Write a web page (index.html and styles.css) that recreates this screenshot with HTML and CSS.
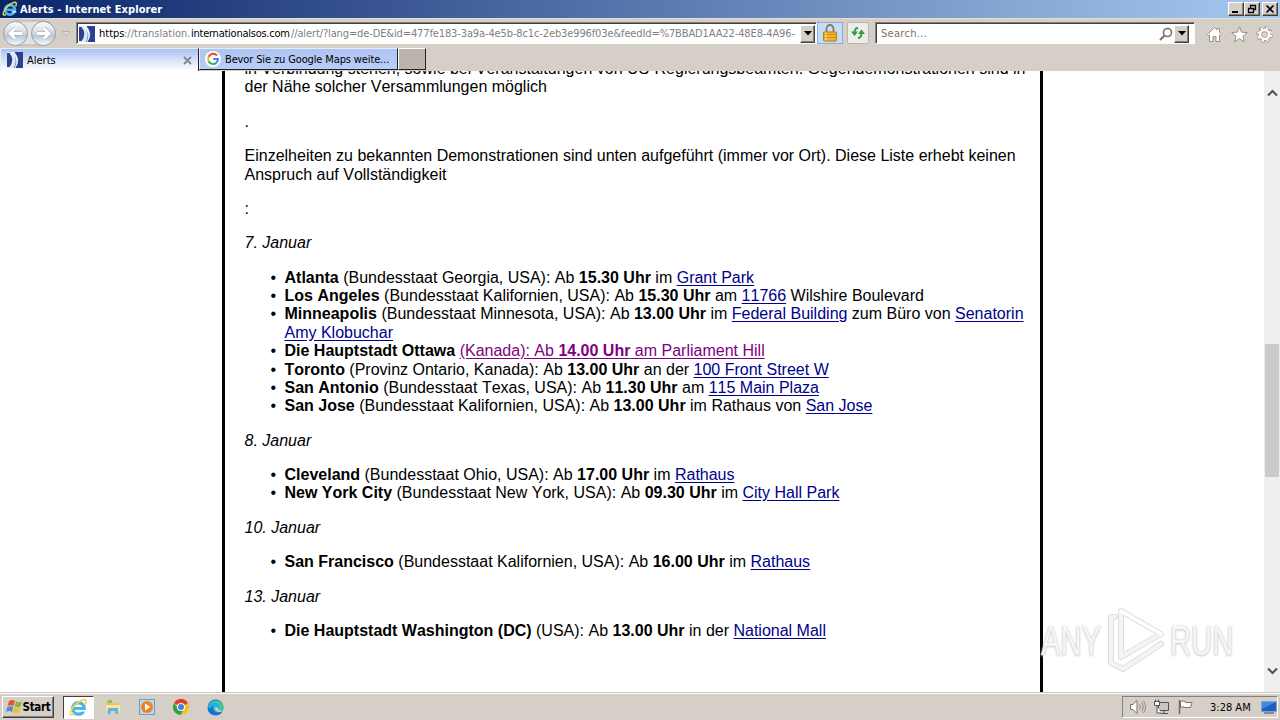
FILE: index.html
```html
<!DOCTYPE html>
<html lang="de">
<head>
  <meta charset="UTF-8">
  <title>Alerts - Internet Explorer</title>
  <link rel="stylesheet" href="styles.css">
</head>
<body>
  <!-- Shared icons -->
  <svg width="0" height="0" class="defs">
    <symbol id="ie" viewBox="0 0 20 20">
      <circle cx="10" cy="11" r="6" fill="none" stroke="#49b5ec" stroke-width="3.6"/>
      <path d="M5 11h11" stroke="#49b5ec" stroke-width="3"/>
      <path d="M12 13.5h6" stroke="#fff" stroke-width="1.6"/>
      <path d="M5 17C-1 20 1 12 8 6s12-6 9 1" fill="none" stroke="#f3d44b" stroke-width="1.8"/>
    </symbol>
    <symbol id="sos" viewBox="0 0 16 16">
      <rect width="16" height="16" fill="#dfe7f6"/>
      <path d="M0 1h2.500q5.500 7 0 14H0z" fill="#2b4190"/>
      <path d="M6 0h10v16H7q4-8-1-16z" fill="#2b4190"/>
      <path d="M5 0q7 7 3 16 6-8-1-16z" fill="#fff" stroke="#fff" stroke-width=".6"/>
    </symbol>
  </svg>

  <div class="window">
    <header class="titlebar">
      <svg class="app-icon" width="16" height="16"><use href="#ie"/></svg>
      <span class="title">Alerts - Internet Explorer</span>
      <div class="window-buttons">
        <button><svg width="14" height="12"><path d="M3 9h6" stroke="#000" stroke-width="2"/></svg></button>
        <button><svg width="14" height="12"><path d="M5.500 5V2.500h5v4H9M5 2.500h6M3.500 5.500h5v4h-5zM3 5.500h6" fill="none" stroke="#000" stroke-width="1.300"/></svg></button>
        <button class="close"><svg width="14" height="12"><path d="M3.500 2.500l7 7m0-7l-7 7" stroke="#000" stroke-width="1.700"/></svg></button>
      </div>
    </header>

    <nav class="toolbar">
      <svg class="back-forward" width="74" height="28" viewBox="0 0 74 28">
        <defs>
          <linearGradient id="glass" x2="0" y2="1">
            <stop stop-color="#fff"/><stop offset=".45" stop-color="#d6dce3"/><stop offset=".6" stop-color="#b9c8d5"/><stop offset="1" stop-color="#f4ffff"/>
          </linearGradient>
        </defs>
        <path d="M15 2h29q6 0 8 4v16q-3 4-8 4H15z" fill="#e4e2e0" stroke="#b5b1ac"/>
        <circle cx="15.500" cy="14.500" r="12" fill="url(#glass)" stroke="#979da3"/>
        <circle cx="43.500" cy="14.500" r="12" fill="url(#glass)" stroke="#979da3"/>
        <path d="M22 14.500H10m5-5l-5 5 5 5M37 14.500h12m-5-5l5 5-5 5" fill="none" stroke="#a2adb6" stroke-width="4.200"/>
        <path d="M22 14.500H10m5-5l-5 5 5 5M37 14.500h12m-5-5l5 5-5 5" fill="none" stroke="#fff" stroke-width="3"/>
        <path d="M62.500 12.500h7l-3.500 4z" fill="#e4e0dc" stroke="#b8b3ac"/>
      </svg>
      <div class="field address">
        <svg width="16" height="16"><use href="#sos"/></svg>
        <span class="url"><b class="u1">https</b><span class="u2">://translation.</span><b class="u3">internationalsos.com</b><span class="u4">//alert/?lang=de-DE&amp;id=477fe183-3a9a-4e5b-8c1c-2eb3e996f03e&amp;feedId=%7BBAD1AA22-48E8-4A96-</span></span>
        <button class="drop"><svg width="8" height="5"><path d="M0 0h8L4 4.500z"/></svg></button>
      </div>
      <div class="lock">
        <svg width="16" height="18" viewBox="0 0 16 18">
          <path d="M4.500 8V4.500a3.500 3.500 0 0 1 7 0V8" fill="none" stroke="#8c7b53" stroke-width="1.800"/>
          <rect x="1.500" y="8" width="13" height="9" rx="1" fill="#f0b429" stroke="#b57b16"/>
          <path d="M2 10.500h12M2 13.500h12" stroke="#cf8f1b"/><path d="M4 8.500v8" stroke="#ffe08a"/>
        </svg>
      </div>
      <div class="refresh">
        <svg width="16" height="16" viewBox="0 0 16 16">
          <path d="M8 3Q4.500 3 4.500 8M8 13q3.500 0 3.500-5" fill="none" stroke="#2e9b3d" stroke-width="1.800"/>
          <path d="M1 6.500h7L4.500 11zM8 9h7l-3.500-4.500z" fill="#2e9b3d"/>
        </svg>
      </div>
      <div class="field search">
        <span class="placeholder">Search...</span>
        <svg width="14" height="14"><circle cx="8.500" cy="5.500" r="4" fill="none" stroke="#77716e" stroke-width="1.600"/><path d="M5.500 8.500L1 13" stroke="#77716e" stroke-width="2"/></svg>
        <button class="drop"><svg width="8" height="5"><path d="M0 0h8L4 4.500z"/></svg></button>
      </div>
      <div class="tools">
        <svg width="17" height="17"><path d="M1.500 8.500L8.500 1.500l2.500 2.500V2.500h2.500v4l2 2-1.200 1.200-.8-.8V15.500h-3.500v-5h-3v5H3.500V9l-1 .8z" fill="#fff" stroke="#97918c"/></svg>
        <svg width="17" height="17"><path d="M8.500 .8l2.100 5.400 5.700.4-4.400 3.600 1.500 5.500-4.900-3.100-4.900 3.100 1.500-5.500L.7 6.600l5.700-.4z" fill="#fff" stroke="#97918c"/></svg>
        <svg width="17" height="17" viewBox="0 0 17 17"><circle cx="8.500" cy="8.500" r="6.800" fill="none" stroke="#97918c" stroke-width="2.800" stroke-dasharray="3.200 2.140"/><circle cx="8.500" cy="8.500" r="4.600" fill="none" stroke="#97918c" stroke-width="4"/><circle cx="8.500" cy="8.500" r="6.500" fill="none" stroke="#fff" stroke-width="2" stroke-dasharray="2.200 2.905" stroke-dashoffset="-.4"/><circle cx="8.500" cy="8.500" r="4.500" fill="none" stroke="#fff" stroke-width="2.500"/><circle cx="8.500" cy="8.500" r="2" fill="#d6cfc8"/></svg>
      </div>
    </nav>

    <div class="tabs">
      <div class="tab active">
        <svg width="16" height="16"><use href="#sos"/></svg>
        <span class="tab-name">Alerts</span>
        <svg class="tab-close" width="9" height="9"><path d="M1 1l7 7m0-7L1 8" stroke="#85888f" stroke-width="2"/></svg>
      </div>
      <div class="tab">
        <svg width="16" height="16" viewBox="0 0 16 16">
          <circle cx="8" cy="8" r="8" fill="#fff"/>
          <g fill="none" stroke-width="2"><path d="M12 4.500A5 5 0 0 0 3.600 5.800" stroke="#ea4335"/><path d="M3.600 5.800a5 5 0 0 0 0 4.400" stroke="#fbbc05"/><path d="M3.600 10.200a5 5 0 0 0 7.800 1.500" stroke="#34a853"/><path d="M11.400 11.700A5 5 0 0 0 13 8H8.200" stroke="#4285f4"/></g>
        </svg>
        <span class="tab-name maps">Bevor Sie zu Google Maps weite...</span>
      </div>
      <div class="new-tab"></div>
    </div>

    <div class="viewport">
      <main class="page">
        <article class="alert">
          <p>in Verbindung stehen, sowie bei Veranstaltungen von US-Regierungsbeamten. Gegendemonstrationen sind in<br>der Nähe solcher Versammlungen möglich</p>
          <p>.</p>
          <p>Einzelheiten zu bekannten Demonstrationen sind unten aufgeführt (immer vor Ort). Diese Liste erhebt keinen<br>Anspruch auf Vollständigkeit</p>
          <p>:</p>
          <p><em>7. Januar</em></p>
          <ul>
            <li><b>Atlanta</b> (Bundesstaat Georgia, USA): Ab <b>15.30 Uhr</b> im <a href="#">Grant Park</a></li>
            <li><b>Los Angeles</b> (Bundesstaat Kalifornien, USA): Ab <b>15.30 Uhr</b> am <a href="#">11766</a> Wilshire Boulevard</li>
            <li><b>Minneapolis</b> (Bundesstaat Minnesota, USA): Ab <b>13.00 Uhr</b> im <a href="#">Federal Building</a> zum Büro von <a href="#">Senatorin<br>Amy Klobuchar</a></li>
            <li><b>Die Hauptstadt Ottawa</b> <a class="visited" href="#">(Kanada): Ab <b>14.00 Uhr</b> am Parliament Hill</a></li>
            <li><b>Toronto</b> (Provinz Ontario, Kanada): Ab <b>13.00 Uhr</b> an der <a href="#">100 Front Street W</a></li>
            <li><b>San Antonio</b> (Bundesstaat Texas, USA): Ab <b>11.30 Uhr</b> am <a href="#">115 Main Plaza</a></li>
            <li><b>San Jose</b> (Bundesstaat Kalifornien, USA): Ab <b>13.00 Uhr</b> im Rathaus von <a href="#">San Jose</a></li>
          </ul>
          <p><em>8. Januar</em></p>
          <ul>
            <li><b>Cleveland</b> (Bundesstaat Ohio, USA): Ab <b>17.00 Uhr</b> im <a href="#">Rathaus</a></li>
            <li><b>New York City</b> (Bundesstaat New York, USA): Ab <b>09.30 Uhr</b> im <a href="#">City Hall Park</a></li>
          </ul>
          <p><em>10. Januar</em></p>
          <ul>
            <li><b>San Francisco</b> (Bundesstaat Kalifornien, USA): Ab <b>16.00 Uhr</b> im <a href="#">Rathaus</a></li>
          </ul>
          <p><em>13. Januar</em></p>
          <ul>
            <li><b>Die Hauptstadt Washington (DC)</b> (USA): Ab <b>13.00 Uhr</b> in der <a href="#">National Mall</a></li>
          </ul>
        </article>
      </main>
      <div class="scrollbar">
        <svg width="11" height="8"><path d="M1 6.500l4.500-4.500L10 6.500" fill="none" stroke="#555" stroke-width="2.200"/></svg>
        <div class="thumb"></div>
        <svg width="11" height="8"><path d="M1 1.500L5.500 6 10 1.500" fill="none" stroke="#555" stroke-width="2.200"/></svg>
      </div>
      <div class="watermark">
        <span>ANY</span>
        <svg width="58" height="66" viewBox="0 0 58 66">
          <g fill="none" stroke-linejoin="round" stroke-linecap="round">
            <path d="M14 4v46l40-23zM8 10H4v46l12 6 38-25" stroke="#dedede" stroke-width="6"/>
            <path d="M14 4v46l40-23zM8 10H4v46l12 6 38-25" stroke="#f4f4f4" stroke-width="4"/>
            <path d="M14 4l40 23" stroke="#fff" stroke-width="3"/>
          </g>
        </svg>
        <span>RUN</span>
      </div>
    </div>

    <footer class="taskbar">
      <button class="start">
        <svg width="17" height="16" viewBox="0 0 17 16"><path d="M3 2q3-2 6 0L7.500 7Q4.500 5.500 1.500 7z" fill="#e2572b"/><path d="M10 2.500q3 1.500 6 0L14.500 7.500q-3 1.500-6 0z" fill="#7fb83a"/><path d="M1.300 8q3-1.500 6 0L6 13q-3-2-6 0z" fill="#4a8fd6"/><path d="M8.300 8.500q3 1.500 6 0L13 13.500q-3 1.500-6 0z" fill="#f4bd2c"/></svg>
        <span>Start</span>
      </button>
      <div class="running"><svg width="19" height="19"><use href="#ie"/></svg></div>
      <div class="pinned">
        <svg width="16" height="16"><path d="M1 2h5l1 2h7v8H1z" fill="#e9c767"/><path d="M3 1h4v3H3z" fill="#7fc46c"/><path d="M1 6h14v6H1z" fill="#f7e5a0"/><path d="M3 15V9h10v6h-2.500v-3h-5v3z" fill="#61b4dd"/></svg>
        <svg width="16" height="16"><rect x=".5" y=".5" width="15" height="15" fill="#b9d7ee" stroke="#6c9fc6"/><circle cx="8" cy="8" r="6" fill="#f08220"/><path d="M6 4.500v7L11.500 8z" fill="#fff"/></svg>
        <svg width="16" height="16" viewBox="0 0 16 16"><circle cx="8" cy="8" r="8" fill="#fbc116"/><path d="M8 8L1 4a8 8 0 0 1 14 0z" fill="#e33b2e"/><path d="M1 4a8 8 0 0 0 6.500 12L11 10 4.500 9z" fill="#2da14c"/><circle cx="8" cy="8" r="4" fill="#fff"/><circle cx="8" cy="8" r="3" fill="#3f7fe8"/></svg>
        <svg width="17" height="17" viewBox="0 0 17 17"><circle cx="8.500" cy="8.500" r="8" fill="#1673c9"/><path d="M1 7a8 8 0 0 1 15.500 1q0 4-4.500 3.500-2.500-.5-1-2Q12 5 7 5 3 5 1 7z" fill="#3ccb9b"/><path d="M1 7Q3 2 9 3.500q5 2 2 6-1.500 1.500 1 2Q14 13 16 11.500 12 15 8 12.500T7 7Q4 7 3 10 1 9 1 7z" fill="#27b0e0"/><path d="M8 8q-1 4 4 5 2 .3 4-1 0-1-3-.5-3-1-2-2.500z" fill="#d6cfc8"/></svg>
      </div>
      <div class="tray">
        <svg width="17" height="16"><path d="M1.500 5.500H4l4-4v13l-4-4H1.500z" fill="#fff" stroke="#77736f"/><path d="M10.500 5.500q2 2.500 0 5M12.500 3.500q3.500 4.500 0 9M14.500 2q4 6 0 12" fill="none" stroke="#8d8985"/></svg>
        <svg width="17" height="16"><path d="M5.500 3.500h10v8h-10z" fill="#c9c7c4" stroke="#55514e"/><path d="M8 14.500h7M11 12v2" stroke="#55514e"/><path d="M1.500 2.500h5v4h-5zM2.500 .5v2m3-2v2M4 7v7h4" fill="#fff" stroke="#55514e"/></svg>
        <svg width="17" height="16"><path d="M2.500 1v14" stroke="#6c6865" stroke-width="1.500"/><path d="M3.500 2.500q3-1.500 5.500 1h6l-1.500 5H8q-2-1.500-4.500 0z" fill="#fff" stroke="#77736f"/></svg>
        <span class="clock">3:28 AM</span>
        <svg class="desktop" width="16" height="14"><rect x=".5" y="1.500" width="15" height="10" fill="#1d5fc0" stroke="#7fa6d4"/><path d="M1 2h14L1 9z" fill="#3f8ae0"/><path d="M3 13h10" stroke="#26477c"/></svg>
      </div>
    </footer>
  </div>
</body>
</html>
```
FILE: styles.css
```css
body {
  margin: 0;
  background: #fff;
  font-family: "DejaVu Sans Condensed", "DejaVu Sans", sans-serif;
  font-size: 11px;
}

.defs {
  position: absolute;
}

svg {
  display: block;
  flex: none;
}

button {
  padding: 0;
  box-sizing: border-box;
  background: #d6cfc8;
  border: 1px solid;
  border-color: #fff #404040 #404040 #fff;
  box-shadow: inset -1px -1px #85807a;
  display: flex;
  align-items: center;
  justify-content: center;
}

.window {
  width: 1280px;
  height: 720px;
  display: flex;
  flex-direction: column;
  overflow: hidden;
}

/* Title bar */
.titlebar {
  height: 18px;
  flex: none;
  display: flex;
  align-items: center;
  padding: 0 2px;
  background: linear-gradient(to right, #0a246a, #a6caf0);
}

.title {
  margin-left: 2px;
  color: #fff;
  font-weight: bold;
  letter-spacing: 0.08px;
}

.window-buttons {
  margin-left: auto;
  display: flex;
}

.window-buttons button {
  width: 16px;
  height: 14px;
}

.window-buttons .close {
  margin-left: 2px;
}

/* Navigation */
.toolbar {
  height: 30px;
  flex: none;
  box-sizing: border-box;
  border-top: 1px solid #e8ddcf;
  padding-bottom: 1px;
  display: flex;
  align-items: center;
  background: #d6cfc8;
}

.field {
  box-sizing: border-box;
  height: 22px;
  display: flex;
  align-items: center;
  background: #fff;
  border: 1px solid;
  border-color: #808080 #fff #fff #808080;
  box-shadow: inset 1px 1px #404040;
}

.address {
  width: 741px;
  margin-left: 2px;
  padding: 1px 1px 0 2px;
}

.url {
  width: 699px;
  margin-left: 4px;
  display: flex;
  white-space: nowrap;
  color: #808080;
}

.url b {
  font-weight: normal;
  color: #000;
}

.u1 { width: 25px; }
.u2 { width: 67px; }
.u3 { width: 100px; letter-spacing: -0.25px; }
.u4 { letter-spacing: -0.12px; }

.drop {
  width: 15px;
  height: 18px;
  margin-left: auto;
}

.lock,
.refresh {
  box-sizing: border-box;
  height: 22px;
  display: flex;
  align-items: center;
  justify-content: center;
}

.lock {
  width: 26px;
  background: #c7dcf7;
  border: 1px solid #86aee0;
}

.refresh {
  width: 22px;
  margin-left: 4px;
  background: #eeeceb;
  border: 1px solid #bbb5ae;
  border-radius: 2px;
}

.search {
  width: 320px;
  margin-left: 6px;
  padding: 1px 5px 0 5px;
  color: #77716e;
}

.placeholder {
  flex: 1;
  letter-spacing: 0.3px;
}

.search .drop {
  margin-left: 1px;
}

.tools {
  display: flex;
  gap: 8px;
  margin: 3px 0 0 11px;
}

/* Tabs */
.tabs {
  height: 23px;
  flex: none;
  display: flex;
  background: #d6cfc8;
}

.tab {
  box-sizing: border-box;
  width: 199px;
  height: 22px;
  padding: 0 5px;
  display: flex;
  align-items: center;
  background: linear-gradient(#aec5f3, #b9cdf8);
  border: 1px solid;
  border-color: #e8edf5 #222 #222 #e8edf5;
}

.tab.active {
  height: 23px;
  padding-left: 6px;
  background: linear-gradient(#a7c1f0, #d7e2f8 50%, #fff);
  border-bottom: 0;
}

.tab-name {
  margin-left: 4px;
  white-space: nowrap;
}

.tab-name.maps {
  letter-spacing: -0.13px;
}

.tab-close {
  margin-left: auto;
  margin-right: 1px;
}

.new-tab {
  box-sizing: border-box;
  width: 28px;
  height: 22px;
  background: #bbb4ad;
  border: 1px solid;
  border-color: #fff #222 #222 #fff;
}

/* Page */
.viewport {
  position: relative;
  flex: 1;
  min-height: 0;
  display: flex;
  background: #fff;
}

.page {
  flex: 1;
  overflow: hidden;
  padding-left: 222px;
}

.alert {
  box-sizing: border-box;
  width: 821px;
  height: 640px;
  margin-top: -11px;
  padding-left: 19.5px;
  border: solid #000;
  border-width: 0 3px;
  font: 16px/18.375px "Liberation Sans", Arial, sans-serif;
  font-kerning: none;
  white-space: nowrap;
}

.alert p {
  margin: 0 0 16px;
}

.alert ul {
  margin: 0 0 16px;
  padding-left: 40px;
  list-style: none;
}

.alert li {
  text-indent: -14px;
}

.alert li::before {
  content: "•";
  display: inline-block;
  width: 14px;
  text-indent: 0;
}

.alert a {
  color: #00008b;
  text-underline-offset: 2px;
}

.alert a.visited {
  color: #800080;
}

.scrollbar {
  width: 16px;
  padding: 18px 0 17px;
  box-sizing: border-box;
  display: flex;
  flex-direction: column;
  align-items: center;
  background: #efefef;
}

.thumb {
  width: 14px;
  height: 133px;
  margin: 247px 0 auto;
  background: #cbcbcb;
}

.watermark {
  position: absolute;
  left: 1041px;
  top: 536px;
  display: flex;
  align-items: center;
  gap: 5px;
  font: 43px/66px "Liberation Sans", Arial, sans-serif;
  color: #f6f6f6;
  text-shadow: 0 0 2px #c4c4c4, 0 1px 3px #d0d0d0;
}

.watermark span {
  width: 61px;
  transform: scaleX(0.68);
  transform-origin: left;
}

/* Taskbar */
.taskbar {
  height: 28px;
  flex: none;
  box-sizing: border-box;
  padding: 2px 2px 1px;
  display: flex;
  align-items: center;
  background: #d6cfc8;
  border-top: 1px solid #c8c2ba;
  box-shadow: inset 0 1px #fff;
}

.start {
  width: 52px;
  height: 22px;
  gap: 0;
  font: bold 11.5px "DejaVu Sans Condensed", sans-serif;
  letter-spacing: -0.3px;
}

.running {
  box-sizing: border-box;
  width: 31px;
  height: 23px;
  margin-left: 9px;
  padding-left: 5px;
  display: flex;
  align-items: center;
  background: #fff;
  border: 1px solid;
  border-color: #404040 #fff #fff #404040;
}

.pinned {
  display: flex;
  align-items: center;
  gap: 18px;
  margin-left: 11px;
}

.tray {
  box-sizing: border-box;
  width: 156px;
  height: 22px;
  margin-left: auto;
  padding-left: 6px;
  display: flex;
  align-items: center;
  gap: 7px;
  border: 1px solid;
  border-color: #85807a #fff #fff #85807a;
}

.clock {
  width: 41px;
  margin-left: 9px;
  white-space: nowrap;
}

.desktop {
  margin-left: 3px;
}
```
